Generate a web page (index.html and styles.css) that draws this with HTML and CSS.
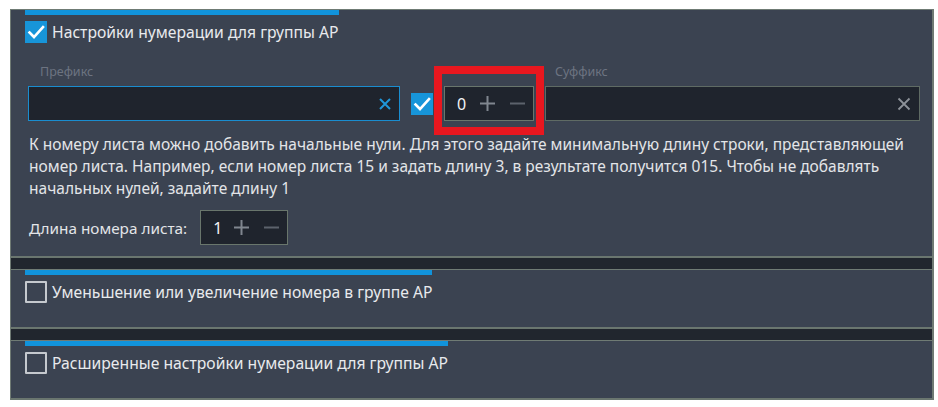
FILE: index.html
```html
<!DOCTYPE html>
<html lang="ru">
<head>
<meta charset="utf-8">
<title>Настройки нумерации</title>
<link rel="stylesheet" href="styles.css">
</head>
<body>
<div class="frame">
  <section class="panel panel-main">
    <div class="head">
      <span class="cb cb-on">
        <svg viewBox="0 0 22 22" width="22" height="22"><path d="M4.5 11.5 L9 16 L18 6" fill="none" stroke="#fff" stroke-width="2.6" stroke-linecap="square"/></svg>
      </span>
      <span class="head-title">Настройки нумерации для группы АР</span>
    </div>

    <div class="fields">
      <div class="lbl lbl-prefix">Префикс</div>
      <div class="lbl lbl-suffix">Суффикс</div>

      <div class="input input-active">
        <svg class="clear" viewBox="0 0 14 14" width="14" height="14"><path d="M2 2 L12 12 M12 2 L2 12" stroke="#1f97da" stroke-width="2" fill="none"/></svg>
      </div>
      <span class="cb cb-on cb-mid">
        <svg viewBox="0 0 22 22" width="22" height="22"><path d="M4.5 11.5 L9 16 L18 6" fill="none" stroke="#fff" stroke-width="2.6" stroke-linecap="square"/></svg>
      </span>
      <div class="spin-wrap">
        <div class="spin">
          <span class="spin-val">0</span>
          <svg class="spin-btn" viewBox="0 0 15 15" width="15" height="15"><path d="M0 7.5 H15 M7.5 0 V15" stroke="#80868f" stroke-width="2"/></svg>
          <svg class="spin-btn" viewBox="0 0 15 15" width="15" height="15"><path d="M0 7.5 H15" stroke="#5c626c" stroke-width="2"/></svg>
        </div>
        <div class="mark"></div>
      </div>
      <div class="input">
        <svg class="clear" viewBox="0 0 14 14" width="14" height="14"><path d="M1.5 1.5 L12.5 12.5 M12.5 1.5 L1.5 12.5" stroke="#8d9299" stroke-width="1.8" fill="none"/></svg>
      </div>
    </div>

    <p class="desc">К номеру листа можно добавить начальные нули. Для этого задайте минимальную длину строки, представляющей<br>номер листа. Например, если номер листа 15 и задать длину 3, в результате получится 015. Чтобы не добавлять<br>начальных нулей, задайте длину 1</p>

    <div class="len-row">
      <span class="len-label">Длина номера листа:</span>
      <div class="spin spin-len">
        <span class="spin-val">1</span>
        <svg class="spin-btn" viewBox="0 0 15 15" width="15" height="15"><path d="M0 7.5 H15 M7.5 0 V15" stroke="#80868f" stroke-width="2"/></svg>
        <svg class="spin-btn" viewBox="0 0 15 15" width="15" height="15"><path d="M0 7.5 H15" stroke="#5c626c" stroke-width="2"/></svg>
      </div>
    </div>
  </section>

  <div class="sep"></div>

  <section class="panel panel-small">
    <div class="head">
      <span class="cb cb-off"></span>
      <span class="head-title">Уменьшение или увеличение номера в группе АР</span>
    </div>
  </section>

  <div class="sep"></div>

  <section class="panel panel-small">
    <div class="head">
      <span class="cb cb-off"></span>
      <span class="head-title">Расширенные настройки нумерации для группы АР</span>
    </div>
  </section>
</div>
</body>
</html>
```

FILE: styles.css
```css
* { box-sizing: border-box; }

html, body {
  margin: 0;
  padding: 0;
  background: #ffffff;
}

body {
  font-family: "Noto Sans", "Open Sans", "DejaVu Sans", sans-serif;
  color: #e4e6e9;
}

.frame {
  margin: 9px 0 0 10px;
  width: 924px;
  background: #21262e;
  border-left: 1px solid #6f7a74;
  border-right: 2px solid #6f7a74;
}

.panel {
  background: #3b4351;
  border-top: 1px solid #6f7b74;
  border-bottom: 2px solid #6a766f;
  padding-left: 14px;
}

.panel-main {
  height: 249px;
}

.panel-small {
  height: 60px;
}

.sep {
  height: 11px;
}

.head {
  display: inline-flex;
  align-items: center;
  gap: 5px;
  border-top: 5px solid #1193db;
  padding-top: 6px;
}

.head-title {
  font-size: 15.7px;
  line-height: 22px;
  color: #e8eaed;
  white-space: nowrap;
}

.cb {
  display: inline-flex;
  width: 22px;
  height: 22px;
  flex: none;
}

.cb-on {
  background: #1795d9;
}

.cb-off {
  border: 2px solid #c5c9ce;
  border-radius: 1px;
}

.fields {
  display: grid;
  grid-template-columns: 372px 22px 90px 375px;
  grid-template-rows: 14px 35px;
  column-gap: 11px;
  row-gap: 7px;
  align-items: center;
  margin: 17px 0 0 3px;
}

.lbl {
  font-size: 12.5px;
  line-height: 14px;
  color: #6d7481;
  grid-row: 1;
}

.lbl-prefix {
  grid-column: 1;
  padding-left: 12px;
}

.lbl-suffix {
  grid-column: 4;
  padding-left: 10px;
}

.input {
  grid-row: 2;
  height: 35px;
  background: #1f242d;
  border: 1px solid #5f6b64;
  display: flex;
  align-items: center;
  justify-content: flex-end;
  padding-right: 8px;
}

.input-active {
  border-color: #1a8dcf;
  padding-right: 7px;
}

.cb-mid {
  grid-row: 2;
}

.spin-wrap {
  grid-row: 2;
  position: relative;
  height: 35px;
}

.spin {
  height: 35px;
  background: #1f242d;
  border: 1px solid #69766c;
  display: flex;
  align-items: center;
  padding-left: 12px;
}

.spin-val {
  font-size: 16px;
  color: #f2f3f5;
  width: 23px;
  flex: none;
}

.spin-btn {
  flex: none;
  margin-right: 15px;
}

.mark {
  position: absolute;
  left: -10px;
  right: -10px;
  top: -20px;
  bottom: -14px;
  border: 8px solid #e8171f;
  pointer-events: none;
}

.desc {
  margin: 12px 0 0 4px;
  font-size: 15.5px;
  line-height: 22px;
  color: #e3e5e8;
  white-space: nowrap;
}

.len-row {
  display: flex;
  align-items: center;
  gap: 13px;
  margin: 11px 0 0 4px;
}

.len-label {
  font-size: 15.3px;
  color: #e3e5e8;
}

.spin-len {
  width: 88px;
  padding-left: 12px;
}

.spin-len .spin-val {
  width: 21px;
}
```
